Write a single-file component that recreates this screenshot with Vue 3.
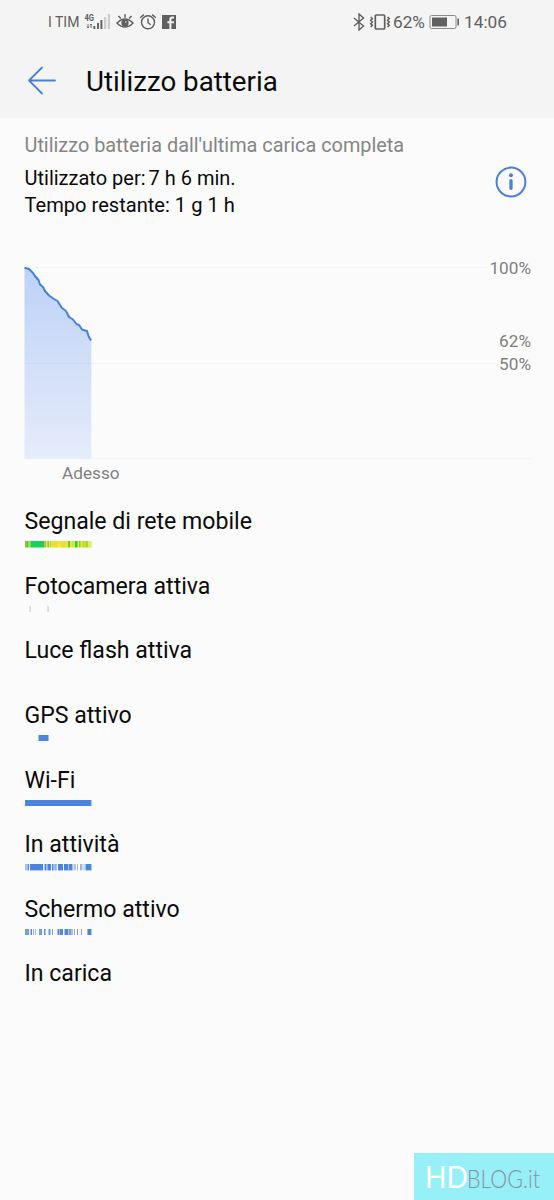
<script setup>
const blue = '#4a84df'
const pale = '#9fc0f0'
const rows = [
  {
    label: 'Segnale di rete mobile',
    bars: [
      [0, 66.5, '#e2ed3c'], [0, 1.5, '#b8a044'], [1.5, 2, '#35cf50'], [3.5, 2, '#a9e24c'], [5.5, 14, '#15d15e'],
      [19.5, 1.5, '#e8a64a'], [22.5, 1.5, '#7bd84c'], [25, 1, '#a9dc48'], [27, 6, '#f0dc32'], [36, 5, '#f0dc32'],
      [43, 2, '#68c83c'], [47, 2, '#cde83e'], [50, 2.5, '#2fc843'], [54, 1.5, '#79d846'], [57, 4, '#cbdc38'], [61, 2, '#b0cf40'], [63, 3.5, '#daf25e'],
    ],
  },
  { label: 'Fotocamera attiva', bars: [[4.5, 1.2, '#c3cfd6'], [22.5, 1.2, '#c3cfd6']] },
  { label: 'Luce flash attiva', bars: [] },
  { label: 'GPS attivo', bars: [[13.5, 10, blue]] },
  { label: 'Wi-Fi', bars: [[0, 66.5, blue]] },
  {
    label: 'In attività',
    bars: [
      [0, 3, pale], [3, 1, blue], [5, 13, blue], [19.5, 1.5, blue], [21, 1.5, pale], [22.5, 3.5, blue], [27, 1.5, blue],
      [28.5, 2, pale], [30.5, 1, blue], [33, 5, blue], [39, 4.5, blue], [44, 3, blue], [47, 1.5, pale],
      [49.5, 1, '#8194a7'], [52, 1, pale], [55.5, 1, '#53799f'], [57.5, 1, pale], [59.5, 1.5, pale], [61, 5.5, blue],
    ],
  },
  {
    label: 'Schermo attivo',
    bars: [
      [0, 4, '#719fdf'], [5.5, 1.5, '#6484b4'], [8, 1, '#89a9d9'], [10, 1, pale], [14, 3, '#719fdf'], [19, 1.5, '#6c92c5'],
      [23.5, 2, '#6099e8'], [27, 1, '#84a5ca'], [32.5, 2, blue], [35, 3, '#5789cc'], [39.5, 4, '#5789cc'],
      [44, 2, '#719fdf'], [46.5, 1, '#6484b4'], [49, 1, '#8aaee2'], [52, 1, '#8194a7'], [56, 1, '#89a9bd'], [62.5, 4, blue],
    ],
  },
  { label: 'In carica', bars: [] },
]
</script>

<template>
  <div class="screen">
    <header>
      <div class="status">
        <span class="carrier">I TIM</span>
        <svg class="signal" width="28" height="20" viewBox="0 0 28 20">
          <text x="0.5" y="8.5" class="net" textLength="9.5" lengthAdjust="spacingAndGlyphs">4G</text>
          <path d="M4 12v4M2.8 14.6 4 16l1.2-1.4M7 16v-4M5.8 13.2 7 12l1.2 1.2" fill="none" stroke="#666" stroke-width="0.9" />
          <path d="M10.3 17v-3M14 17V11" stroke="#666" stroke-width="2" />
          <path d="M17.4 17V8" stroke="#666" stroke-width="2" />
          <path d="M21.2 17V5M24.9 17V2" stroke="#ccc" stroke-width="2.2" />
        </svg>
        <svg class="eye" width="18" height="18" viewBox="0 0 18 18" fill="none" stroke="#606060" stroke-width="1.5">
          <path d="M1 10Q9 1.8 17 10Q9 18.2 1 10ZM9 4.7V1.3M4.9 5.6 2.4 3M13.1 5.6 15.6 3" />
          <circle cx="9" cy="10" r="2.9" fill="#606060" /><circle cx="9.8" cy="9" r="0.8" fill="#ddd" stroke="none" />
        </svg>
        <svg class="alarm" width="18" height="18" viewBox="0 0 18 18" fill="none" stroke="#606060" stroke-width="1.4">
          <circle cx="9" cy="9.3" r="6.5" /><path d="M9 5.5v4.2l2.7 2M1.2 4.7 4.8 1.6M16.8 4.7 13.2 1.6" />
        </svg>
        <svg class="facebook" width="14" height="14" viewBox="0 0 14 14">
          <path d="M0 0h14v14H0z" fill="#606060" />
          <path d="M9.4 14V8.3h2.5V6.3H9.4V4.7q0-1.2 1.1-1.2H12V1.6h-2Q7.4 1.6 7.4 4.3v2H5.4v2h2V14z" fill="#f4f4f4" />
        </svg>
        <span class="spacer"></span>
        <svg class="bluetooth" width="12" height="18" viewBox="0 0 12 18" fill="none" stroke="#606060" stroke-width="1.4">
          <path d="m1 5 9.5 8L6 17V1l4.5 4L1 13" />
        </svg>
        <svg class="vibrate" width="22" height="16" viewBox="0 0 22 16" fill="none" stroke="#606060">
          <rect x="6.3" y="1" width="9.4" height="14" rx="1" stroke-width="1.7" />
          <path d="M1.7 3 3.3 4.7 1.7 6.3 3.3 8 1.7 9.7 3.3 11.3 1.7 13M18.6 3 20.2 4.7 18.6 6.3 20.2 8 18.6 9.7 20.2 11.3 18.6 13" stroke-width="1.6" />
        </svg>
        <span class="percent">62%</span>
        <svg class="battery" width="31" height="16" viewBox="0 0 31 16">
          <rect x="1" y="1.5" width="26" height="13" rx="1.5" fill="none" stroke="#8a8a8a" stroke-width="1" />
          <path d="M3 3.5h15v9H3z" fill="#606060" /><path d="M28.4 4.5H30v7h-1.6z" fill="#606060" />
        </svg>
        <span class="clock">14:06</span>
      </div>
      <div class="titlebar">
        <svg width="30" height="30" viewBox="0 0 30 30" fill="none" stroke="#4a80d6" stroke-width="1.8" stroke-linecap="round" stroke-linejoin="round">
          <path d="M15 1.5 2 14.5 15 27.5M2 14.5H28" />
        </svg>
        <h1>Utilizzo batteria</h1>
      </div>
    </header>

    <section class="summary">
      <div>
        <p class="caption">Utilizzo batteria dall'ultima carica completa</p>
        <p class="used">Utilizzato per:<span>7 h 6 min.</span></p>
        <p class="left">Tempo restante: 1 g 1 h</p>
      </div>
      <svg class="info" width="32" height="32" viewBox="0 0 32 32">
        <circle cx="16" cy="16" r="14.4" fill="none" stroke="#4a80d6" stroke-width="2" />
        <circle cx="16" cy="9.3" r="2" fill="#4a80d6" />
        <path d="M16 14.7v7.6" stroke="#4a80d6" stroke-width="3.3" stroke-linecap="round" />
      </svg>
    </section>

    <svg class="chart" width="554" height="234" viewBox="0 256 554 234">
      <defs>
        <linearGradient id="fade" x1="0" y1="0" x2="0" y2="1">
          <stop offset="0" stop-color="#bdd2f7" /><stop offset="1" stop-color="#e6ecfa" />
        </linearGradient>
      </defs>
      <path d="M24.5 267.5H486M24.5 363.5H496M24.5 458.5H531" stroke="#f2f4f7" />
      <path d="M24.5 267.5 29 269 33 273 38.5 280 43 287 49 295.5 57.5 301 62 308 69 317 76.5 324 82 329.5 87 331 91.3 341V459H24.5Z" fill="url(#fade)" />
      <path d="M24.5 363.5h67" stroke="#c8d8ef" stroke-width="0.6" />
      <path d="M24.5 267.8 29 269 33 273 35 276 38.5 280 40 284.5 43 287 45 291 49 295.5 54 299 57.5 301 62 308 66 311 69 317 73 319.5 76.5 324 79 325 82 329.5 87 331 88.5 336 91 340.5" fill="none" stroke="#467fdd" stroke-width="2" stroke-linejoin="round" />
      <g class="axis">
        <text x="531" y="274" text-anchor="end">100%</text>
        <text x="531" y="347" text-anchor="end">62%</text>
        <text x="531" y="370" text-anchor="end">50%</text>
        <text x="62" y="479">Adesso</text>
      </g>
    </svg>

    <ul>
      <li v-for="row in rows" :key="row.label">
        <span>{{ row.label }}</span>
        <svg width="67" height="6.4" viewBox="0 0 67 6.4">
          <rect v-for="(bar, i) in row.bars" :key="i" :x="bar[0]" y="0" :width="bar[1]" height="6.4" :fill="bar[2]" />
        </svg>
      </li>
    </ul>

    <svg class="watermark" width="140" height="47" viewBox="0 0 140 47">
      <text class="hd" x="11" y="34.5" textLength="43" lengthAdjust="spacingAndGlyphs">HD</text>
      <text class="blog" x="53" y="34.5" textLength="73" lengthAdjust="spacingAndGlyphs">BLOG.it</text>
    </svg>
  </div>
</template>

<style>
body { margin: 0; }
</style>

<style scoped>
.screen { position: relative; width: 554px; height: 1200px; overflow: hidden; background: #fbfbfb; color: #0a0a0a; font-family: Roboto, sans-serif; }
header { height: 118px; background: #f4f4f4; }
.status { display: flex; align-items: center; height: 44px; padding: 0 46px 0 48px; color: #606060; }
.status svg, .status span { flex: none; }
.carrier { width: 31px; font-size: 14px; line-height: 20px; white-space: nowrap; }
.signal { margin-left: 5px; }
.net { font: 700 9.5px Roboto, sans-serif; fill: #606060; }
.eye { margin-left: 4px; }
.alarm { margin-left: 4.5px; }
.facebook { margin-left: 5.5px; }
.status .spacer { flex: 1; }
.vibrate { margin-left: 4px; }
.percent { width: 35px; margin-left: 2px; font-size: 17.2px; }
.battery { margin-left: 1px; }
.clock { width: 44px; margin-left: 4px; font-size: 17.3px; }
.titlebar { display: flex; align-items: center; height: 74px; padding-left: 27px; }
h1 { margin: 2px 0 0 29px; font-size: 27.7px; line-height: 36px; font-weight: 400; white-space: nowrap; }
.summary { display: flex; justify-content: space-between; height: 138px; padding: 0 27px 0 24.5px; box-sizing: border-box; }
.summary p { margin: 0; white-space: nowrap; font-size: 20px; line-height: 27px; }
.summary .caption { margin-top: 14px; margin-bottom: 6px; color: #858585; font-size: 19.87px; }
.summary .left { font-size: 20.1px; }
.used span { margin-left: 3px; }
.info { margin-top: 48px; }
.chart { display: block; }
.axis text { font: 17.2px Roboto, sans-serif; fill: #808080; }
ul { margin: 0; padding: 18.3px 0 0 24.5px; list-style: none; }
li { height: 64.6px; }
li span { display: block; height: 32.9px; font-size: 23.1px; line-height: 28px; white-space: nowrap; }
li svg { display: block; }
.watermark { position: absolute; right: 0; bottom: 0; background: #97eff8; font-family: Lato, sans-serif; }
.hd { fill: #fff; font-size: 31px; }
.blog { fill: #82949d; font-size: 26px; font-weight: 300; }
</style>
